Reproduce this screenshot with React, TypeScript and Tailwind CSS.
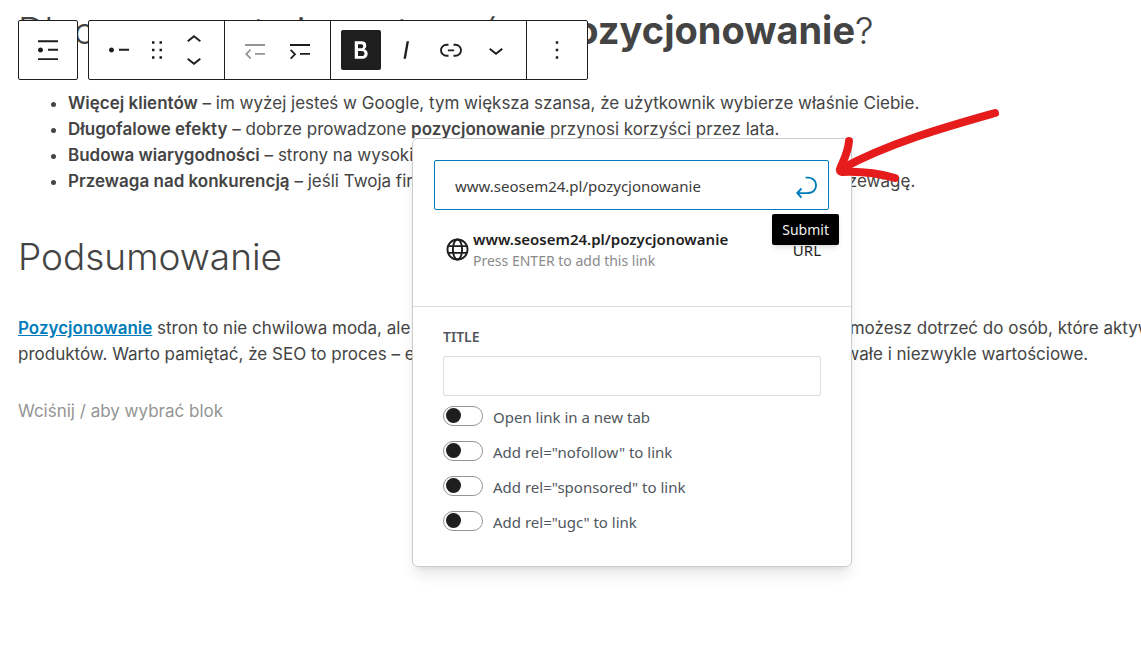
import type { ReactNode } from "react";

const icons = {
  listItem: "M12 11v1.5h8V11h-8zm-6-1c-1.1 0-2 .9-2 2s.9 2 2 2 2-.9 2-2-.9-2-2-2z",
  parent: "M4 4.2v1.5h16V4.2H4zM12 11v1.5h8V11h-8zM6 10c-1.1 0-2 .9-2 2s.9 2 2 2 2-.9 2-2-.9-2-2-2zM4 18.5V20h16v-1.5H4z",
  drag: "M8 7h2V5H8v2zm0 6h2v-2H8v2zm0 6h2v-2H8v2zm6-14v2h2V5h-2zm0 8h2v-2h-2v2zm0 6h2v-2h-2v2z",
  up: "M6.5 12.4L12 8l5.5 4.4-.9 1.2L12 10l-4.5 3.6-1-1.2z",
  down: "M17.5 11.6L12 16l-5.5-4.4.9-1.2L12 14l4.5-3.6 1 1.2z",
  outdent: "M4 7.2v1.5h16V7.2H4zm8 8.6h8v-1.5h-8v1.5zm-4-4.6l-4 4 4 4 1-1-3-3 3-3-1-1z",
  indent: "M4 7.2v1.5h16V7.2H4zm8 8.6h8v-1.5h-8v1.5zm-8-3.5l3 3-3 3 1 1 4-4-4-4-1 1z",
  bold: "M14.7 11.3c1-.6 1.5-1.6 1.5-3 0-2.3-1.3-3.4-4-3.4H7v14h5.8c1.4 0 2.5-.3 3.3-1 .8-.7 1.2-1.7 1.2-2.9.1-1.9-.8-3.1-2.6-3.7zm-5.1-4h2.3c.6 0 1.1.1 1.4.4.3.3.5.7.5 1.2s-.2 1-.5 1.2c-.3.3-.8.4-1.4.4H9.6V7.3zm4.6 9c-.4.3-1 .4-1.7.4H9.6v-3.9h2.9c.7 0 1.3.2 1.7.5.4.3.6.8.6 1.5s-.2 1.2-.6 1.5z",
  italic: "M12.5 5L10 19h1.9l2.5-14z",
  link: "M10 17.389H8.444A5.194 5.194 0 1 1 8.444 7H10v1.5H8.444a3.694 3.694 0 0 0 0 7.389H10v1.5ZM14 7h1.556a5.194 5.194 0 0 1 0 10.39H14v-1.5h1.556a3.694 3.694 0 0 0 0-7.39H14V7Zm-4.5 6h5v-1.5h-5V13Z",
  more: "M13 19h-2v-2h2v2zm0-6h-2v-2h2v2zm0-6h-2V5h2v2z",
  submit: "M6.734 16.106l2.176-2.38-1.093-1.028-3.846 4.158 3.846 4.157 1.093-1.027-2.176-2.38h2.811c1.125 0 2.25.03 3.374 0 1.428-.001 3.362-.25 4.963-1.277 1.66-1.065 2.868-2.906 2.868-5.859 0-2.479-1.327-4.896-3.65-5.93-1.82-.813-3.044-.8-4.806-.788l-.567.002v1.5c.184 0 .368 0 .553-.002 1.82-.007 2.704-.014 4.21.657 1.854.827 2.76 2.657 2.76 4.561 0 2.472-.973 3.824-2.178 4.596-1.258.807-2.864 1.04-4.163 1.04h-.02c-1.115.03-2.229 0-3.344 0H6.734z",
};

const linkOptions = [
  { id: "new-tab", label: "Open link in a new tab" },
  { id: "nofollow", label: 'Add rel="nofollow" to link' },
  { id: "sponsored", label: 'Add rel="sponsored" to link' },
  { id: "ugc", label: 'Add rel="ugc" to link' },
];

const Icon = ({ name }: { name: keyof typeof icons }) => (
  <svg viewBox="0 0 24 24" className="size-[30px] shrink-0" fill="currentColor" aria-hidden="true">
    <path d={icons[name]} />
  </svg>
);

const ToolButton = ({ label, className = "", children }: { label: string; className?: string; children: ReactNode }) => (
  <button type="button" aria-label={label} className={`flex items-center justify-center ${className}`}>
    {children}
  </button>
);

const BlockToolbar = () => (
  <div role="toolbar" aria-label="Block tools" className="absolute top-5 left-[18px] flex gap-2.5 text-[#1e1e1e]">
    <div className="flex size-[60px] items-center justify-center rounded-xs border border-[#1e1e1e] bg-white">
      <ToolButton label="Select parent block" className="size-12">
        <Icon name="parent" />
      </ToolButton>
    </div>
    <div className="flex h-[60px] divide-x divide-[#1e1e1e] rounded-xs border border-[#1e1e1e] bg-white">
      <div className="flex w-[136px] items-center pl-2">
        <ToolButton label="List item" className="h-12 w-11">
          <Icon name="listItem" />
        </ToolButton>
        <ToolButton label="Drag" className="h-12 w-8">
          <Icon name="drag" />
        </ToolButton>
        <div className="flex w-[42px] flex-col">
          <ToolButton label="Move up" className="h-5">
            <Icon name="up" />
          </ToolButton>
          <ToolButton label="Move down" className="h-5">
            <Icon name="down" />
          </ToolButton>
        </div>
      </div>
      <div className="flex w-[106px] items-center justify-center">
        <ToolButton label="Outdent" className="h-12 w-[45px] text-[#949494]">
          <Icon name="outdent" />
        </ToolButton>
        <ToolButton label="Indent" className="h-12 w-[45px]">
          <Icon name="indent" />
        </ToolButton>
      </div>
      <div className="flex w-[196px] items-center pl-2.5">
        <ToolButton label="Bold" className="mr-0.5 size-10 rounded-xs bg-[#1e1e1e] text-white">
          <Icon name="bold" />
        </ToolButton>
        <ToolButton label="Italic" className="h-12 w-[45px]">
          <Icon name="italic" />
        </ToolButton>
        <ToolButton label="Link" className="h-12 w-[45px]">
          <Icon name="link" />
        </ToolButton>
        <ToolButton label="More formatting" className="h-12 w-[45px]">
          <Icon name="down" />
        </ToolButton>
      </div>
      <ToolButton label="Options" className="w-[60px]">
        <Icon name="more" />
      </ToolButton>
    </div>
  </div>
);

const LinkPopover = () => (
  <form
    aria-label="Link"
    className="absolute top-[138px] left-[412px] w-[440px] rounded-md border border-[#ccc] bg-white font-['Noto_Sans',sans-serif] text-[15px] text-[#1e1e1e] shadow-lg"
  >
    <div className="pt-[21px] pr-[22px] pb-[34px] pl-[21px]">
      <div className="relative">
        <input
          type="text"
          aria-label="URL"
          defaultValue="www.seosem24.pl/pozycjonowanie"
          className="h-[50px] w-full rounded-xs border border-[#007cba] pt-0.5 pr-12 pl-5 text-[#3c3c3c] outline-none"
        />
        <button type="submit" aria-label="Submit" className="absolute top-3 right-2 text-[#007cba]">
          <Icon name="submit" />
        </button>
        <div
          role="tooltip"
          className="absolute top-[54px] -right-2.5 rounded-xs bg-black px-2.5 py-1 text-sm leading-[23px] text-[#f0f0f0] shadow-md"
        >
          Submit
        </div>
      </div>
      <div className="flex items-center pt-4 pr-2 pl-3">
        <svg viewBox="0 0 24 24" className="mr-1 size-[23px] shrink-0" fill="none" stroke="currentColor" strokeWidth="2" aria-hidden="true">
          <circle cx="12" cy="12" r="10.5" />
          <ellipse cx="12" cy="12" rx="4.8" ry="10.5" />
          <path d="M2.5 8.5h19M2.5 15.5h19" />
        </svg>
        <div className="flex-1 pt-0.5 leading-[22px]">
          <div className="font-semibold">www.seosem24.pl/pozycjonowanie</div>
          <div className="text-sm leading-[22px] text-[#8a8a8a]">Press ENTER to add this link</div>
        </div>
        <span className="pt-0.5 leading-[22px]">URL</span>
      </div>
    </div>
    <div className="border-t border-[#ddd] px-[30px] pt-5 pb-[35px] text-[#50575e]">
      <label htmlFor="link-title" className="block text-sm font-semibold text-[#50575e]">
        TITLE
      </label>
      <input id="link-title" type="text" className="mt-[9px] block h-10 w-full rounded-xs border border-[#ddd] px-3" />
      <div className="mt-2.5 space-y-[15px]">
        {linkOptions.map((option) => (
          <div key={option.id} className="flex h-5 items-center gap-2.5">
            <span className="relative flex h-5 w-10">
              <input
                id={option.id}
                type="checkbox"
                className="peer h-5 w-10 appearance-none rounded-full border border-[#949494] bg-white"
              />
              <span className="pointer-events-none absolute top-0.5 left-[3px] size-[15px] rounded-full bg-[#1e1e1e] peer-checked:left-[22px]" />
            </span>
            <label htmlFor={option.id} className="pt-0.5">
              {option.label}
            </label>
          </div>
        ))}
      </div>
    </div>
  </form>
);

const PointerArrow = () => (
  <svg
    viewBox="0 0 180 90"
    className="pointer-events-none absolute top-[100px] left-[825px] h-[90px] w-[180px]"
    fill="none"
    stroke="#e61c1c"
    strokeWidth="8"
    strokeLinecap="round"
    strokeLinejoin="round"
    aria-hidden="true"
  >
    <path d="M170 13C124 26 66 42 16 69" />
    <path d="M24 41C23 53 19 59 15 69Q14 71 17 72C38 71 52 73 70 78" />
  </svg>
);

const App = () => {
  return (
    <main className="relative min-h-screen overflow-hidden bg-white pt-1 pl-[18px] font-[Inter,sans-serif] text-[17px] text-[#444]">
      <h2 className="text-[37px] leading-[52px] font-light whitespace-nowrap">
        Dlaczego warto inwestować w <strong className="text-[38px] font-bold">pozycjonowanie</strong>?
      </h2>
      <ul className="mt-[33px] list-disc pl-[50px] leading-[26px] whitespace-nowrap">
        <li>
          <strong className="font-semibold">Więcej klientów</strong> – im wyżej jesteś w Google, tym większa szansa, że użytkownik wybierze właśnie Ciebie.
        </li>
        <li>
          <strong className="font-semibold">Długofalowe efekty</strong> – dobrze prowadzone <strong className="font-semibold">pozycjonowanie</strong> przynosi korzyści przez lata.
        </li>
        <li>
          <strong className="font-semibold">Budowa wiarygodności</strong> – strony na wysokich pozycjach budzą zaufanie.
        </li>
        <li>
          <strong className="font-semibold">Przewaga nad konkurencją</strong> – jeśli Twoja firma jest wyżej niż inne w wynikach Google, zyskasz przewagę.
        </li>
      </ul>
      <h2 className="mt-[37px] text-[37px] leading-[52px] font-light">Podsumowanie</h2>
      <p className="mt-8 leading-[26px] whitespace-nowrap">
        <a href="#pozycjonowanie" className="font-semibold text-[#007cba] underline">
          Pozycjonowanie
        </a>{" "}
        stron to nie chwilowa moda, ale skuteczna strategia marketingowa, dzięki której łatwo możesz dotrzeć do osób, które aktywnie szukają
        <br />
        produktów. Warto pamiętać, że SEO to proces – efekty przychodzą dopiero z czasem, lecz są bardzo trwałe i niezwykle wartościowe.
      </p>
      <p className="mt-[31px] leading-[26px] text-[#949494]">Wciśnij / aby wybrać blok</p>
      <BlockToolbar />
      <LinkPopover />
      <PointerArrow />
    </main>
  );
};

export default App;
